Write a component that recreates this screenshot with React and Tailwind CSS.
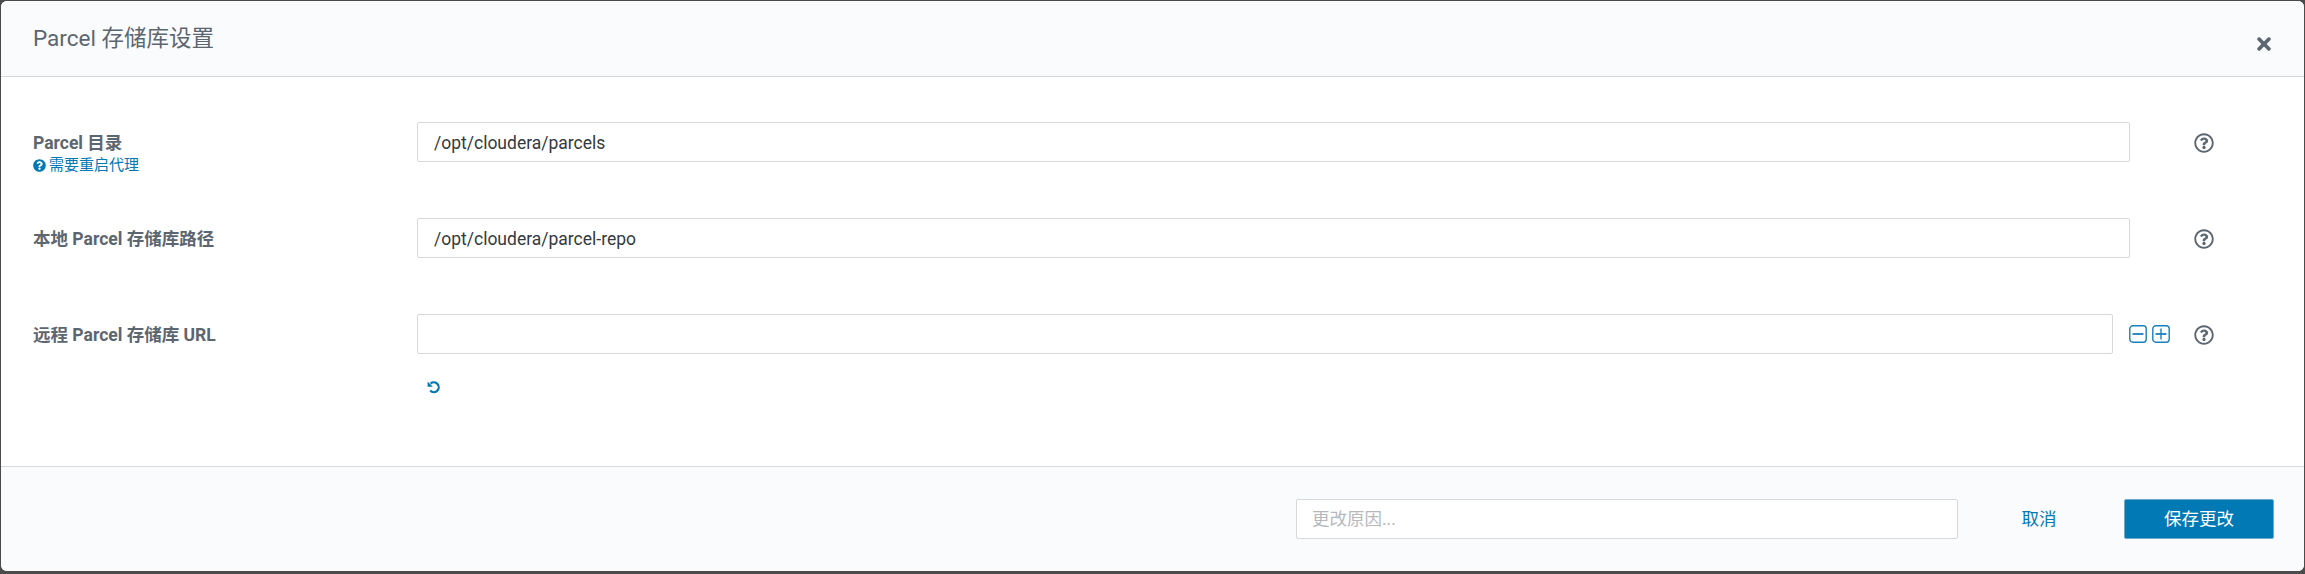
import React from "react";
import { FaTimes, FaQuestionCircle, FaRegQuestionCircle } from "react-icons/fa";

const font = { fontFamily: '"Roboto","Noto Sans CJK SC",sans-serif' };

function Square({ plus }) {
  return (
    <svg width="18" height="18" viewBox="0 0 18 18" fill="none" stroke="#1b7fbd" strokeWidth="1.4">
      <rect x="0.8" y="0.8" width="16.4" height="16.4" rx="3" />
      <path d="M3.5 9h11" strokeWidth="1.8" />
      {plus && <path d="M9 3.5v11" strokeWidth="1.4" />}
    </svg>
  );
}

function Undo() {
  return (
    <svg width="14" height="14" viewBox="0 0 14 14" fill="none">
      <path d="M3.6 3.6A4.9 4.9 0 1 1 3.2 10.6" stroke="#0079b5" strokeWidth="2.2" />
      <path d="M0.6 1.6v5.2h5.2z" fill="#0079b5" />
    </svg>
  );
}

function Row({ label, sub, value, extra, children }) {
  return (
    <div className="flex items-start h-[96px]">
      <div className="w-[384px] shrink-0 pt-[9px]">
        <div className="text-[17.5px] leading-[24px] font-bold text-[#5c6670]">{label}</div>
        {sub && (
          <div className="flex items-center gap-[3px] text-[15px] leading-[20px] text-[#0079b5]">
            <FaQuestionCircle size={13} />
            <span>{sub}</span>
          </div>
        )}
      </div>
      <div className="flex-1 min-w-0">
        <div className="flex items-center">
          <input
            readOnly
            value={value}
            className="flex-1 min-w-0 h-[40px] px-[16px] pt-[1px] text-[17.5px] text-[#333a40] bg-white border border-[#d5d8dc] rounded-[2px] outline-none"
          />
          {extra ? (
            <>
              <div className="ml-[16px] flex items-center gap-[5px] shrink-0 -mt-[1px]">
                <Square />
                <Square plus />
              </div>
              <FaRegQuestionCircle className="ml-[24px] mt-[1px] shrink-0 text-[#5c6670]" size={20} />
            </>
          ) : (
            <FaRegQuestionCircle className="ml-[64px] mt-[1px] shrink-0 text-[#5c6670]" size={20} />
          )}
        </div>
        {children}
      </div>
    </div>
  );
}

export default function App() {
  return (
    <div className="h-[574px] w-[2305px] bg-[#4b4b4b] pt-[1px] pl-[1px] pr-[1px] overflow-hidden" style={font}>
      <div className="h-[570px] bg-white rounded-[6px] overflow-hidden flex flex-col">
        <div className="h-[76px] shrink-0 bg-[#fafbfd] border-b border-[#d5d8dc] flex items-center justify-between pl-[32px] pr-[30px]">
          <div className="text-[22.5px] text-[#5c6670]">Parcel 存储库设置</div>
          <FaTimes className="text-[#5c6670] mt-[10px]" size={20} />
        </div>
        <div className="flex-1 pt-[45px] pl-[32px] pr-[90px]">
          <Row label="Parcel 目录" sub="需要重启代理" value="/opt/cloudera/parcels" />
          <Row label="本地 Parcel 存储库路径" value="/opt/cloudera/parcel-repo" />
          <Row label="远程 Parcel 存储库 URL" value="" extra>
            <div className="pt-[26px] pl-[10px]">
              <Undo />
            </div>
          </Row>
        </div>
        <div className="h-[105px] shrink-0 bg-[#fafbfd] border-t border-[#d5d8dc] flex items-center justify-end pr-[30px]">
          <input
            readOnly
            placeholder="更改原因..."
            className="w-[662px] h-[40px] px-[15px] text-[17.5px] bg-white border border-[#d5d8dc] rounded-[2px] outline-none placeholder:text-[#b5b9bd]"
          />
          <button className="w-[166px] pr-[4px] text-center text-[17.5px] text-[#0079b5]">取消</button>
          <button className="w-[150px] h-[40px] bg-[#0079b5] text-white text-[17.5px] rounded-[2px] border border-[#6fa9c9]">保存更改</button>
        </div>
      </div>
    </div>
  );
}
